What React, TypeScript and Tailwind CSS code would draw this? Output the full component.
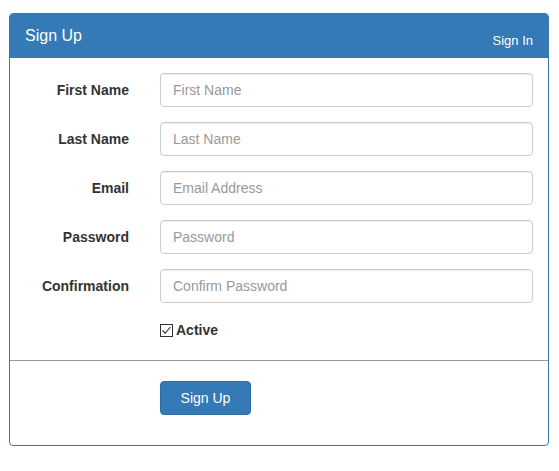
import React from "react";

const fields = [
  { label: "First Name", placeholder: "First Name", type: "text" },
  { label: "Last Name", placeholder: "Last Name", type: "text" },
  { label: "Email", placeholder: "Email Address", type: "email" },
  { label: "Password", placeholder: "Password", type: "password" },
  { label: "Confirmation", placeholder: "Confirm Password", type: "password" },
];

export default function App() {
  return (
    <div className="min-h-[471px] w-[559px] bg-white pt-[13px] pl-[9px] font-['Liberation_Sans',Arial,sans-serif] text-[#333]">
      <div className="w-[540px] overflow-hidden rounded-[4px] border border-[#3d77a8] bg-white">
        <div className="flex h-[44px] items-start justify-between bg-[#337ab7] px-[15px] text-white">
          <h3 className="mt-[12px] text-[16px] leading-[20px]">Sign Up</h3>
          <a className="mt-[19px] text-[13px] leading-[16px]">Sign In</a>
        </div>
        <div className="pt-[15px] pb-[18px]">
          <div className="flex flex-col gap-[15px]">
            {fields.map((f) => (
              <div key={f.label} className="flex items-center">
                <label className="w-[119px] pr-0 text-right text-[14px] font-bold leading-[20px]">
                  {f.label}
                </label>
                <input
                  type={f.type}
                  placeholder={f.placeholder}
                  className="ml-[31px] h-[34px] w-[373px] rounded-[4px] border border-[#ccc] px-[12px] text-[14px] shadow-[inset_0_1px_1px_rgba(0,0,0,0.075)] outline-none placeholder:text-[#999]"
                />
              </div>
            ))}
          </div>
          <div className="mt-[15px] flex h-[24px] items-center pl-[150px]">
            <span className="flex h-[13px] w-[13px] items-center justify-center border border-[#333] bg-white">
              <svg width="11" height="11" viewBox="0 0 11 11">
                <path d="M1.5 5.5 L4.2 8.2 L9.5 2" fill="none" stroke="#333" strokeWidth="1.1" />
              </svg>
            </span>
            <span className="ml-[3px] text-[14px] font-bold leading-[20px]">Active</span>
          </div>
        </div>
        <div className="border-t border-[#999] pt-[20px] pb-[30px] pl-[150px]">
          <button className="h-[34px] w-[91px] rounded-[4px] border border-[#2e6da4] bg-[#337ab7] text-[14px] text-white">
            Sign Up
          </button>
        </div>
      </div>
    </div>
  );
}
